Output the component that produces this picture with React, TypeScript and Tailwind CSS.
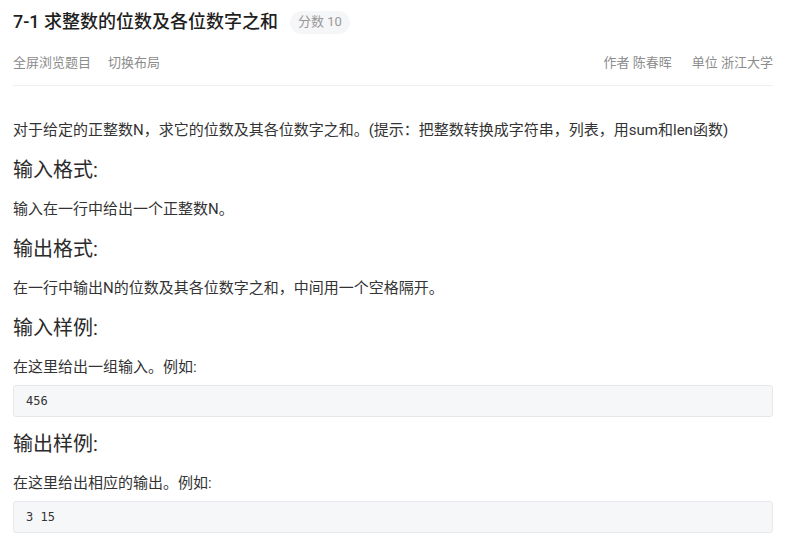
import React from "react";

const font = { fontFamily: 'Roboto, "Noto Sans CJK SC", sans-serif' };

function Code({ children }: { children: React.ReactNode }) {
  return (
    <div className="mt-[7px] h-[32px] rounded-[3px] border border-[#e6e7ea] bg-[#f6f7f9] pl-3 flex items-center text-[12px] text-[#333] font-['DejaVu_Sans_Mono',monospace]">
      {children}
    </div>
  );
}

function H({ children, tight }: { children: React.ReactNode; tight?: boolean }) {
  return (
    <h3 className={(tight ? "mt-[13px]" : "mt-[15px]") + " text-[20px] leading-7 font-normal text-[#2b2b2b]"}>
      {children}
    </h3>
  );
}

function P({ children, first }: { children: React.ReactNode; first?: boolean }) {
  return <p className={(first ? "mt-[33px]" : "mt-[14px]") + " text-[15px] leading-[22px] text-[#333]"}>{children}</p>;
}

export default function App() {
  return (
    <div className="bg-white w-[802px] h-[540px] overflow-hidden" style={font}>
      <div className="pl-[13px] w-[773px] pt-[10px]">
        <div className="flex items-center gap-[12px] h-6">
          <h1 className="text-[18px] leading-6 font-medium text-[#1f1f1f]">7-1 求整数的位数及各位数字之和</h1>
          <span className="h-[23px] px-2 rounded-full bg-[#f5f6f8] text-[13px] text-[#999] flex items-center">分数 10</span>
        </div>
        <div className="mt-[19px] flex justify-between items-center h-5 text-[13px] text-[#8c8c8c] pb-0">
          <div className="flex gap-[17px]">
            <span>全屏浏览题目</span>
            <span>切换布局</span>
          </div>
          <div className="flex gap-[20px]">
            <span>作者 陈春晖</span>
            <span>单位 浙江大学</span>
          </div>
        </div>
        <div className="mt-3 border-b border-[#eceef0]" />
        <P first>对于给定的正整数N，求它的位数及其各位数字之和。(提示：把整数转换成字符串，列表，用sum和len函数)</P>
        <H>输入格式:</H>
        <P>输入在一行中给出一个正整数N。</P>
        <H>输出格式:</H>
        <P>在一行中输出N的位数及其各位数字之和，中间用一个空格隔开。</P>
        <H>输入样例:</H>
        <P>在这里给出一组输入。例如:</P>
        <Code>456</Code>
        <H tight>输出样例:</H>
        <P>在这里给出相应的输出。例如:</P>
        <Code>3 15</Code>
      </div>
    </div>
  );
}
